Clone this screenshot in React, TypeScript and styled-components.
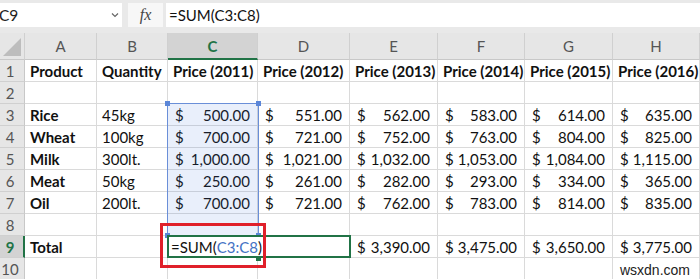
import React from "react";
import styled, { createGlobalStyle } from "styled-components";

const GlobalStyle = createGlobalStyle`
  html, body { margin: 0; padding: 0; background: #ffffff; overflow: hidden; }
  body { font-family: Lato, "Open Sans", "Liberation Sans", sans-serif; }
`;

const COLS = [25, 72, 71, 90, 92, 88, 87, 88, 87];
const LETTERS = ["A", "B", "C", "D", "E", "F", "G", "H"];

const Page = styled.div`
  width: 700px;
  height: 279px;
  overflow: hidden;
  background: #e9e9e9;
`;

const FormulaBar = styled.div`
  display: flex;
  align-items: stretch;
  height: 24px;
  padding: 3px 0 6px 0;
  background: #e9e9e9;
`;

const NameBox = styled.div`
  width: 122px;
  background: #fff;
  display: flex;
  align-items: center;
  justify-content: space-between;
  font-size: 15.5px;
  color: #222;
  padding-right: 2px;
  box-sizing: border-box;
`;

const NameText = styled.span`
  margin-left: -1px;
`;

const Chevron = styled.svg`
  width: 8px;
  height: 6px;
  margin-right: 1px;
`;

const FxBox = styled.div`
  width: 35px;
  margin-left: 6px;
  background: #f7f7f7;
  display: flex;
  align-items: center;
  justify-content: center;
  font-family: "Liberation Serif", serif;
  font-style: italic;
  font-size: 16px;
  color: #444;
`;

const FormulaInput = styled.div`
  flex: 1;
  margin-left: 3px;
  background: #fff;
  display: flex;
  align-items: center;
  padding-left: 3px;
  font-size: 15px;
  color: #111;
`;

const Sheet = styled.div`
  position: relative;
  display: grid;
  grid-template-columns: ${COLS.map((c) => c + "px").join(" ")};
  grid-template-rows: 27px;
  grid-auto-rows: 22px;
  background: #fff;
`;

const Corner = styled.div`
  background: #e6e6e6;
  border-right: 1px solid #d0d0d0;
  border-bottom: 1px solid #c8c8c8;
  position: relative;
  box-sizing: border-box;
`;

const CornerTri = styled.svg`
  position: absolute;
  right: 3px;
  bottom: 3px;
`;

const ColHead = styled.div<{ $active?: boolean }>`
  box-sizing: border-box;
  background: ${(p) => (p.$active ? "#d3d3d3" : "#e6e6e6")};
  border-right: 1px solid #d0d0d0;
  border-bottom: ${(p) => (p.$active ? "2px solid #217346" : "1px solid #c8c8c8")};
  display: flex;
  align-items: center;
  justify-content: center;
  font-size: 15px;
  color: ${(p) => (p.$active ? "#217346" : "#555")};
  font-weight: ${(p) => (p.$active ? 700 : 400)};
  padding-top: ${(p) => (p.$active ? "1px" : "0")};
`;

const RowHead = styled.div<{ $active?: boolean }>`
  box-sizing: border-box;
  background: ${(p) => (p.$active ? "#d3d3d3" : "#e6e6e6")};
  border-right: ${(p) => (p.$active ? "2px solid #217346" : "1px solid #c8c8c8")};
  border-bottom: 1px solid #d0d0d0;
  display: flex;
  align-items: center;
  justify-content: center;
  font-size: 15px;
  color: ${(p) => (p.$active ? "#217346" : "#555")};
  font-weight: ${(p) => (p.$active ? 700 : 400)};
  padding-right: ${(p) => (p.$active ? "3px" : "4px")};
`;

const Cell = styled.div<{ $bold?: boolean }>`
  box-sizing: border-box;
  border-right: 1px solid #dadada;
  border-bottom: 1px solid #dadada;
  display: flex;
  align-items: center;
  padding: 1px 0 0 5px;
  font-size: 15px;
  font-weight: ${(p) => (p.$bold ? 700 : 400)};
  color: #111;
  white-space: nowrap;
  overflow: visible;
  min-width: 0;
`;

const MoneyCell = styled(Cell)`
  justify-content: space-between;
  padding: 1px 7px 0 7px;
`;

const Selection = styled.div`
  position: absolute;
  left: 167px;
  top: 70px;
  width: 92px;
  height: 134px;
  box-sizing: border-box;
  border: 1px solid #6a8fd8;
  background: rgba(70, 120, 220, 0.12);
  pointer-events: none;
`;

const Handle = styled.div<{ $x: number; $y: number; $color?: string }>`
  position: absolute;
  left: ${(p) => p.$x}px;
  top: ${(p) => p.$y}px;
  width: 5px;
  height: 5px;
  background: ${(p) => p.$color || "#5b86d8"};
`;

const EditBox = styled.div`
  position: absolute;
  left: 167px;
  top: 202px;
  width: 184px;
  height: 23px;
  box-sizing: border-box;
  border: 2px solid #217346;
  background: #fff;
  display: flex;
  align-items: center;
  padding: 1px 0 0 2px;
  font-size: 15px;
  color: #111;
  white-space: nowrap;
`;

const RefText = styled.span`
  color: #4472c4;
`;

const RedBox = styled.div`
  position: absolute;
  left: 160px;
  top: 190px;
  width: 106px;
  height: 45px;
  box-sizing: border-box;
  border: 3px solid #e0202a;
  pointer-events: none;
`;

const Watermark = styled.div`
  position: absolute;
  right: 10px;
  bottom: 2px;
  font-family: "Liberation Sans", Arial, sans-serif;
  font-size: 14px;
  color: #222;
`;

type Row = {
  a?: string;
  b?: string;
  prices?: (string | null)[];
};

const rows: Row[] = [
  { a: "Rice", b: "45kg", prices: ["500.00", "551.00", "562.00", "583.00", "614.00", "635.00"] },
  { a: "Wheat", b: "100kg", prices: ["700.00", "721.00", "752.00", "763.00", "804.00", "825.00"] },
  { a: "Milk", b: "300lt.", prices: ["1,000.00", "1,021.00", "1,032.00", "1,053.00", "1,084.00", "1,115.00"] },
  { a: "Meat", b: "50kg", prices: ["250.00", "261.00", "282.00", "293.00", "334.00", "365.00"] },
  { a: "Oil", b: "200lt.", prices: ["700.00", "721.00", "762.00", "783.00", "814.00", "835.00"] },
  {},
  { a: "Total", prices: [null, null, "3,390.00", "3,475.00", "3,650.00", "3,775.00"] },
  {},
];

const headers = ["Product", "Quantity", "Price (2011)", "Price (2012)", "Price (2013)", "Price (2014)", "Price (2015)", "Price (2016)"];

export default function App() {
  return (
    <Page>
      <GlobalStyle />
      <FormulaBar>
        <NameBox>
          <NameText>C9</NameText>
          <Chevron viewBox="0 0 8 6">
            <path d="M1 1.5 L4 4.5 L7 1.5" fill="none" stroke="#666" strokeWidth="1.2" />
          </Chevron>
        </NameBox>
        <FxBox>fx</FxBox>
        <FormulaInput>=SUM(C3:C8)</FormulaInput>
      </FormulaBar>
      <Sheet>
        <Corner>
          <CornerTri width="18" height="18" viewBox="0 0 18 18">
            <polygon points="18,0 18,18 0,18" fill="#bdbdbd" />
          </CornerTri>
        </Corner>
        {LETTERS.map((l) => (
          <ColHead key={l} $active={l === "C"}>
            {l}
          </ColHead>
        ))}
        <RowHead>1</RowHead>
        {headers.map((t) => (
          <Cell key={t} $bold>
            {t}
          </Cell>
        ))}
        <RowHead>2</RowHead>
        {Array.from({ length: 8 }).map((_, j) => (
          <Cell key={"e" + j} />
        ))}
        {rows.map((r, i) => {
          const n = i + 3;
          return (
            <React.Fragment key={n}>
              <RowHead $active={n === 9}>{n}</RowHead>
              <Cell $bold>{r.a}</Cell>
              <Cell>{r.b}</Cell>
              {Array.from({ length: 6 }).map((_, j) => {
                const v = r.prices ? r.prices[j] : null;
                return v ? (
                  <MoneyCell key={j}>
                    <span>$</span>
                    <span>{v}</span>
                  </MoneyCell>
                ) : (
                  <Cell key={j} />
                );
              })}
            </React.Fragment>
          );
        })}
        <Selection />
        <Handle $x={165} $y={68} />
        <Handle $x={256} $y={68} />
        <Handle $x={165} $y={200} />
        <Handle $x={256} $y={200} />
        <EditBox>
          =SUM(<RefText>C3:C8</RefText>)
        </EditBox>
        <Handle $x={256} $y={223} $color="#217346" />
        <RedBox />
        <Watermark>wsxdn.com</Watermark>
      </Sheet>
    </Page>
  );
}
